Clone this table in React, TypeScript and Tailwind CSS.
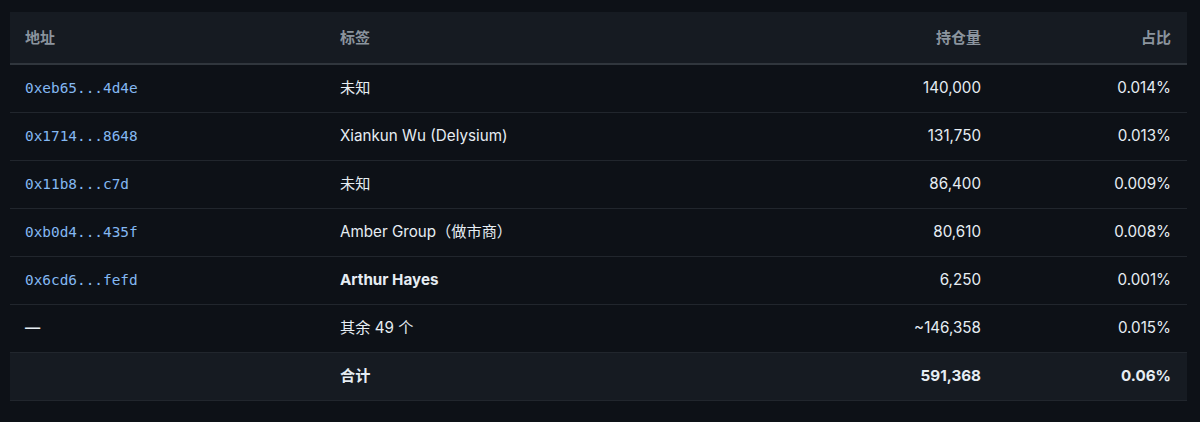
import React from 'react';

interface Holder {
  address: string;
  label: string;
  amount: string;
  ratio: string;
  bold?: boolean;
  link?: boolean;
}

const holders: Holder[] = [
  { address: '0xeb65...4d4e', label: '未知', amount: '140,000', ratio: '0.014%', link: true },
  { address: '0x1714...8648', label: 'Xiankun Wu (Delysium)', amount: '131,750', ratio: '0.013%', link: true },
  { address: '0x11b8...c7d', label: '未知', amount: '86,400', ratio: '0.009%', link: true },
  { address: '0xb0d4...435f', label: 'Amber Group（做市商）', amount: '80,610', ratio: '0.008%', link: true },
  { address: '0x6cd6...fefd', label: 'Arthur Hayes', amount: '6,250', ratio: '0.001%', link: true, bold: true },
  { address: '—', label: '其余 49 个', amount: '~146,358', ratio: '0.015%' },
];

const sans = "font-['Inter','Noto_Sans_CJK_SC',sans-serif]";

export default function App() {
  return (
    <div className={`min-h-screen bg-[#0d1117] pt-3 px-[10px] ${sans}`}>
      <table className="w-[1177px] border-collapse text-[15.2px] text-[#e6edf3]">
        <thead>
          {/* 表头 */}
          <tr className="bg-[#161b22] border-b-2 border-[#30363d] text-[15px] text-[#8b949e]">
            <th className="h-[52px] w-[315px] px-[15px] pt-px text-left font-semibold">地址</th>
            <th className="px-[15px] pt-px text-left font-semibold">标签</th>
            <th className="w-[300px] px-4 pt-px text-right font-semibold">持仓量</th>
            <th className="w-[190px] px-4 pt-px text-right font-semibold">占比</th>
          </tr>
        </thead>
        <tbody>
          {holders.map((h) => (
            <tr key={h.address + h.label} className="border-b border-[#21262d]">
              <td className="h-[48px] px-[15px] pt-px">
                {h.link ? (
                  <span className="font-['DejaVu_Sans_Mono',monospace] text-[14.4px] text-[#84b8f2]">
                    {h.address}
                  </span>
                ) : (
                  <span className="font-semibold">{h.address}</span>
                )}
              </td>
              <td className={`px-[15px] pt-px ${h.bold ? 'font-bold' : ''}`}>{h.label}</td>
              <td className="px-4 pt-px text-right">{h.amount}</td>
              <td className="px-4 pt-px text-right">{h.ratio}</td>
            </tr>
          ))}
          {/* 合计 */}
          <tr className="bg-[#161b22] border-b border-[#21262d] font-bold">
            <td className="h-[48px] px-[15px] pt-px"></td>
            <td className="px-[15px] pt-px">合计</td>
            <td className="px-4 pt-px text-right">591,368</td>
            <td className="px-4 pt-px text-right">0.06%</td>
          </tr>
        </tbody>
      </table>
    </div>
  );
}
